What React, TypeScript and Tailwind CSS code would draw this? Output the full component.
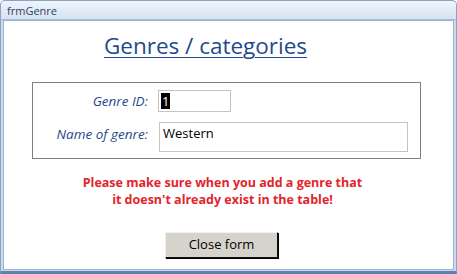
export default function App() {
  return (
    <div className="w-[457px] h-[274px] overflow-hidden bg-white font-['Open_Sans',sans-serif]">
      <div className="flex h-full flex-col rounded-t-[5px] border border-b-[3px] border-[#8ea3c0] border-b-[#5f80b0] bg-[#c9d9ee]">
        {/* Title bar */}
        <div className="flex h-[19px] items-center rounded-t-[4px] bg-gradient-to-b from-[#eef4fb] to-[#d6e3f3] px-[6px] border-b border-[#a9bfdc]">
          <span className="text-[11px] leading-none text-[#30425a]">frmGenre</span>
        </div>

        {/* Form body */}
        <div className="mx-[2px] mb-[1px] flex flex-1 flex-col items-center border border-[#9fb3cf] bg-white">
          <h1 className="mt-[10px] ml-[-46px] text-[22.5px] leading-[30px] text-[#1f4a8a] underline decoration-1 underline-offset-[3px]">
            Genres / categories
          </h1>

          <div className="mt-[21px] ml-[-4px] flex w-[389px] flex-col gap-[10px] border border-[#7f7f7f] pt-[7px] pb-[6px]">
            <div className="flex items-center">
              <span className="w-[122px] pr-[7px] text-right text-[13.5px] italic text-[#1f4a8a]">Genre ID:</span>
              <div className="ml-[3px] flex h-[22px] w-[73px] items-center border border-[#c3c3c3] px-[2px]">
                <span className="bg-black px-[1px] text-[13px] leading-[16px] text-white">1</span>
              </div>
            </div>
            <div className="flex items-start">
              <span className="w-[122px] pt-[2px] pr-[7px] text-right text-[13.5px] italic text-[#1f4a8a]">Name of genre:</span>
              <div className="ml-[4px] h-[30px] w-[249px] border border-[#c3c3c3] px-[3px] pt-[1px] text-[13px] leading-[18px] text-black">
                Western
              </div>
            </div>
          </div>

          <p className="mt-[15px] ml-[-12px] text-center text-[12.5px] font-bold leading-[17px] text-[#e3242b]">
            Please make sure when you add a genre that
            <br />
            it doesn't already exist in the table!
          </p>

          <button className="mt-[24px] ml-[-14px] h-[26px] w-[113px] border border-t-[#f2f1ed] border-l-[#f2f1ed] border-r-[#111] border-b-[#111] bg-[#d6d3cc] text-[13px] text-black shadow-[1px_1px_0_#000]">
            Close form
          </button>
        </div>
      </div>
    </div>
  );
}
